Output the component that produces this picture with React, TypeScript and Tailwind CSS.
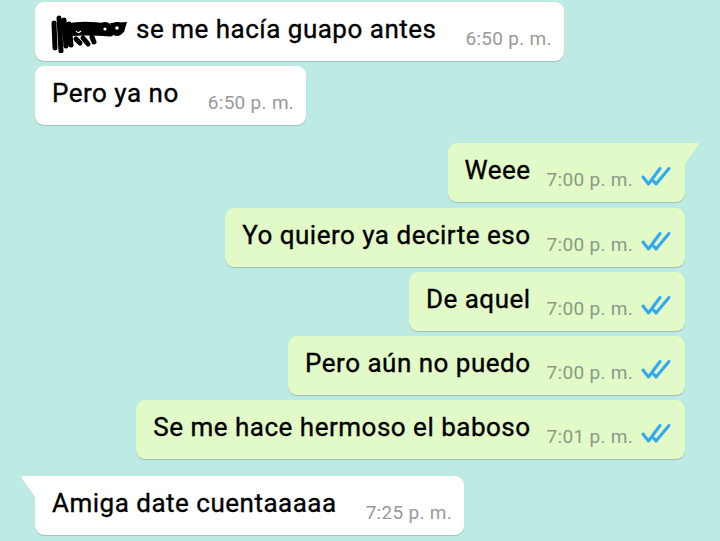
import React from 'react';

type Msg = {
  text: string;
  time: string;
  out?: boolean;
  tail?: boolean;
  redacted?: boolean;
  gapTop?: string;
};

const messages: Msg[] = [
  { text: 'se me hacía guapo antes', time: '6:50 p. m.', redacted: true, gapTop: 'mt-[2px]' },
  { text: 'Pero ya no', time: '6:50 p. m.', gapTop: 'mt-[5px]' },
  { text: 'Weee', time: '7:00 p. m.', out: true, tail: true, gapTop: 'mt-[18px]' },
  { text: 'Yo quiero ya decirte eso', time: '7:00 p. m.', out: true, gapTop: 'mt-[6px]' },
  { text: 'De aquel', time: '7:00 p. m.', out: true, gapTop: 'mt-[5px]' },
  { text: 'Pero aún no puedo', time: '7:00 p. m.', out: true, gapTop: 'mt-[5px]' },
  { text: 'Se me hace hermoso el baboso', time: '7:01 p. m.', out: true, gapTop: 'mt-[5px]' },
  { text: 'Amiga date cuentaaaaa', time: '7:25 p. m.', tail: true, gapTop: 'mt-[17px]' },
];

function Ticks() {
  return (
    <svg width="30" height="21" viewBox="0 0 30 21" className="ml-[8px] -mt-[3px] mb-[3px] shrink-0">
      <path d="M2 11 L7.5 18 L19 2.5" fill="none" stroke="#2faaef" strokeWidth="3" strokeLinejoin="round" strokeLinecap="round" />
      <path d="M12.5 15 L15 18 L28 2.5" fill="none" stroke="#2faaef" strokeWidth="3" strokeLinejoin="round" strokeLinecap="round" />
    </svg>
  );
}

// hand-drawn blot that hides a name in the first message
function Scribble() {
  return (
    <svg width="78" height="38" viewBox="0 0 78 38" className="-ml-[2px] mr-[8px] shrink-0">
      <g fill="none" stroke="#000" strokeLinecap="round" strokeLinejoin="round">
        <path d="M4 8 L5 33 M9 3 L11 36 M14 5 L16 31 M19 9 L21 30" strokeWidth="5" />
        <path d="M18 12 C30 9, 44 10, 58 12 M20 18 C32 16, 46 17, 60 18" strokeWidth="7" />
        <path d="M26 24 L30 28 M33 23 L38 29 M42 22 L44 27" strokeWidth="5" />
      </g>
      <circle cx="55" cy="14" r="7" fill="#000" />
      <circle cx="67" cy="14" r="7" fill="#000" />
      <path d="M60 8 L77 7 L74 17 L66 20 Z" fill="#000" />
      <circle cx="55" cy="14" r="1.6" fill="#fff" />
      <circle cx="67" cy="13" r="1.8" fill="#fff" />
      <path d="M26 16 q2 3 5 0" fill="none" stroke="#fff" strokeWidth="1.2" />
    </svg>
  );
}

function Bubble({ m }: { m: Msg }) {
  const bg = m.out ? 'bg-[#e2fac7]' : 'bg-white';
  const corner = m.tail ? (m.out ? 'rounded-tr-none' : 'rounded-tl-none') : '';
  return (
    <div className={`flex ${m.out ? 'justify-end pr-[35px]' : 'justify-start pl-[35px]'} ${m.gapTop}`}>
      <div
        className={`relative flex items-start h-[59px] rounded-[9px] ${corner} ${bg} shadow-[0_1px_1px_rgba(0,0,0,0.18)] ${
          m.out ? 'pl-[17px] pr-[14px]' : 'pl-[17px] pr-[12px]'
        }`}
      >
        {m.tail && m.out && (
          <svg width="16" height="23" viewBox="0 0 16 23" className="absolute top-0 -right-[15px]">
            <path d="M0 0 L13 0 Q16 0 14 2.5 L0 22 Z" fill="#e2fac7" />
          </svg>
        )}
        {m.tail && !m.out && (
          <svg width="16" height="23" viewBox="0 0 16 23" className="absolute top-0 -left-[15px]">
            <path d="M16 0 L3 0 Q0 0 2 2.5 L16 22 Z" fill="#ffffff" />
          </svg>
        )}
        <span className="flex items-start mt-[13px] text-[26px] leading-[28px] tracking-[0.5px] text-black [-webkit-text-stroke:0.35px_black] whitespace-nowrap">
          {m.redacted && <Scribble />}
          {m.text}
        </span>
        <span
          className={`flex items-end mt-[26px] text-[19px] leading-[21px] tracking-[0.3px] whitespace-nowrap ${
            m.out ? 'ml-[16px] text-[#8c9987]' : 'ml-[29px] text-[#999999]'
          }`}
        >
          {m.time}
          {m.out && <Ticks />}
        </span>
      </div>
    </div>
  );
}

export default function App() {
  return (
    <div className="w-[720px] h-[541px] overflow-hidden bg-[#bdebe4] font-['Roboto',sans-serif] flex flex-col">
      {messages.map((m, i) => (
        <Bubble key={i} m={m} />
      ))}
    </div>
  );
}
